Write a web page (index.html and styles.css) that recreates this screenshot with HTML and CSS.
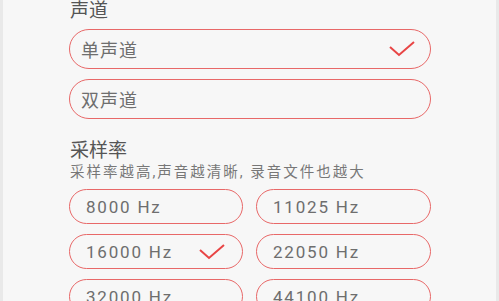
FILE: index.html
```html
<!DOCTYPE html>
<html lang="zh-CN">
<head>
  <meta charset="UTF-8">
  <meta name="viewport" content="width=device-width, initial-scale=1.0">
  <title>录音设置</title>
  <link rel="stylesheet" href="styles.css">
</head>
<body>
  <div class="screen">
    <div class="settings">
      <h2 class="section-title first">声道</h2>
      <div class="option-list">
        <div class="option selected">
          <span>单声道</span>
          <svg class="check" width="26" height="16" viewBox="0 0 26 16"><polyline points="1,6 10,14 25,1" /></svg>
        </div>
        <div class="option">
          <span>双声道</span>
        </div>
      </div>

      <h2 class="section-title">采样率</h2>
      <p class="section-desc">采样率越高,声音越清晰, 录音文件也越大</p>
      <div class="rate-grid">
        <div class="option small"><span>8000 Hz</span></div>
        <div class="option small"><span>11025 Hz</span></div>
        <div class="option small selected">
          <span>16000 Hz</span>
          <svg class="check" width="26" height="16" viewBox="0 0 26 16"><polyline points="1,6 10,14 25,1" /></svg>
        </div>
        <div class="option small"><span>22050 Hz</span></div>
        <div class="option small"><span>32000 Hz</span></div>
        <div class="option small"><span>44100 Hz</span></div>
      </div>
    </div>
  </div>
</body>
</html>
```

FILE: styles.css
```css
  /* General Styles */
  body {
    font-family: Roboto, "Noto Sans CJK SC", sans-serif;
    margin: 0;
    padding: 0;
    background: #e9e9e9;
    overflow: hidden;
  }
  .screen {
    margin: 0 3px 0 3px;
    height: 301px;
    background: #f7f7f7;
    overflow: hidden;
  }
  .settings {
    width: 362px;
    margin-left: 66px;
  }

  .section-title {
    margin: 21px 0 0 1px;
    font-size: 19px;
    line-height: 22px;
    font-weight: normal;
    color: #555;
  }
  .section-title.first {
    margin-top: 0;
  }
  .section-desc {
    margin: 2px 0 0 1px;
    font-size: 14.5px;
    line-height: 18px;
    letter-spacing: 2px;
    color: #777;
  }

  .option-list {
    display: flex;
    flex-direction: column;
    gap: 10px;
    margin-top: 7px;
  }
  .option {
    display: flex;
    align-items: center;
    justify-content: space-between;
    height: 40px;
    box-sizing: border-box;
    padding: 0 15px 0 11px;
    border: 1.5px solid #e86868;
    border-radius: 20px;
    font-size: 18px;
    letter-spacing: 1px;
    color: #6e6e6e;
  }
  .check polyline {
    fill: none;
    stroke: #e84545;
    stroke-width: 2;
  }

  .rate-grid {
    display: grid;
    grid-template-columns: 174px 175px;
    column-gap: 13px;
    row-gap: 10px;
    margin-top: 7px;
  }
  .option.small {
    height: 35px;
    border-radius: 18px;
    padding: 0 17px 0 16px;
    font-size: 17px;
    letter-spacing: 1.8px;
  }
```
